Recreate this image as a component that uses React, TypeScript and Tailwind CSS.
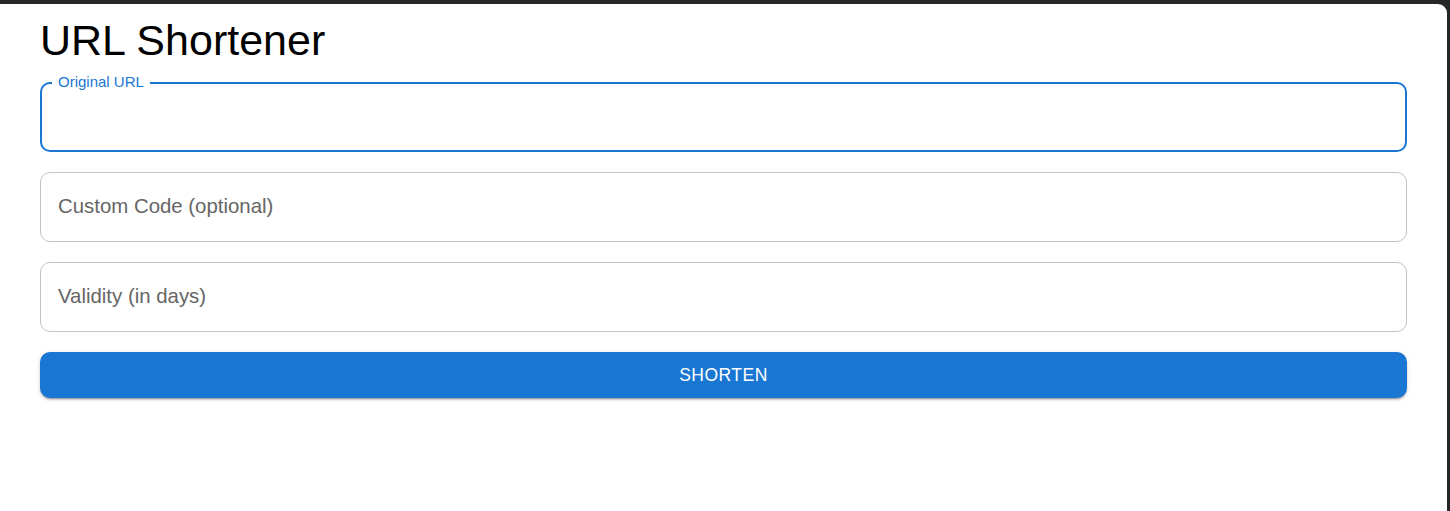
import React from "react";

export default function App() {
  return (
    <div className="w-[1450px] h-[511px] bg-[#262626] pt-[4px] overflow-hidden" style={{ fontFamily: '"Liberation Sans", Arial, sans-serif' }}>
      <div className="w-[1447px] h-[507px] bg-white rounded-tr-[9px] px-[40px] pt-[10px]">
        <h1 className="text-[43px] leading-[52.5px] text-black font-normal">URL Shortener</h1>
        <div className="mt-[15.5px] flex flex-col gap-[20px]">
          <div className="relative h-[70px] rounded-[10px] border-2 border-[#1976d2]">
            <span className="absolute left-[10px] top-[-11px] bg-white px-[6px] text-[15px] leading-[18px] text-[#1976d2]">
              Original URL
            </span>
          </div>
          <div className="h-[70px] rounded-[10px] border border-[#c4c4c4] flex items-center pl-[17px] pb-[2px]">
            <span className="text-[20.4px] text-[#666666]">Custom Code (optional)</span>
          </div>
          <div className="h-[70px] rounded-[10px] border border-[#c4c4c4] flex items-center pl-[17px] pb-[2px]">
            <span className="text-[20.4px] text-[#666666]">Validity (in days)</span>
          </div>
          <button className="h-[46px] w-full rounded-[10px] bg-[#1976d2] text-white text-[17.5px] tracking-[0.5px] uppercase shadow-[0_3px_1px_-2px_rgba(0,0,0,0.2),0_2px_2px_0_rgba(0,0,0,0.14),0_1px_5px_0_rgba(0,0,0,0.12)]">
            Shorten
          </button>
        </div>
      </div>
    </div>
  );
}
